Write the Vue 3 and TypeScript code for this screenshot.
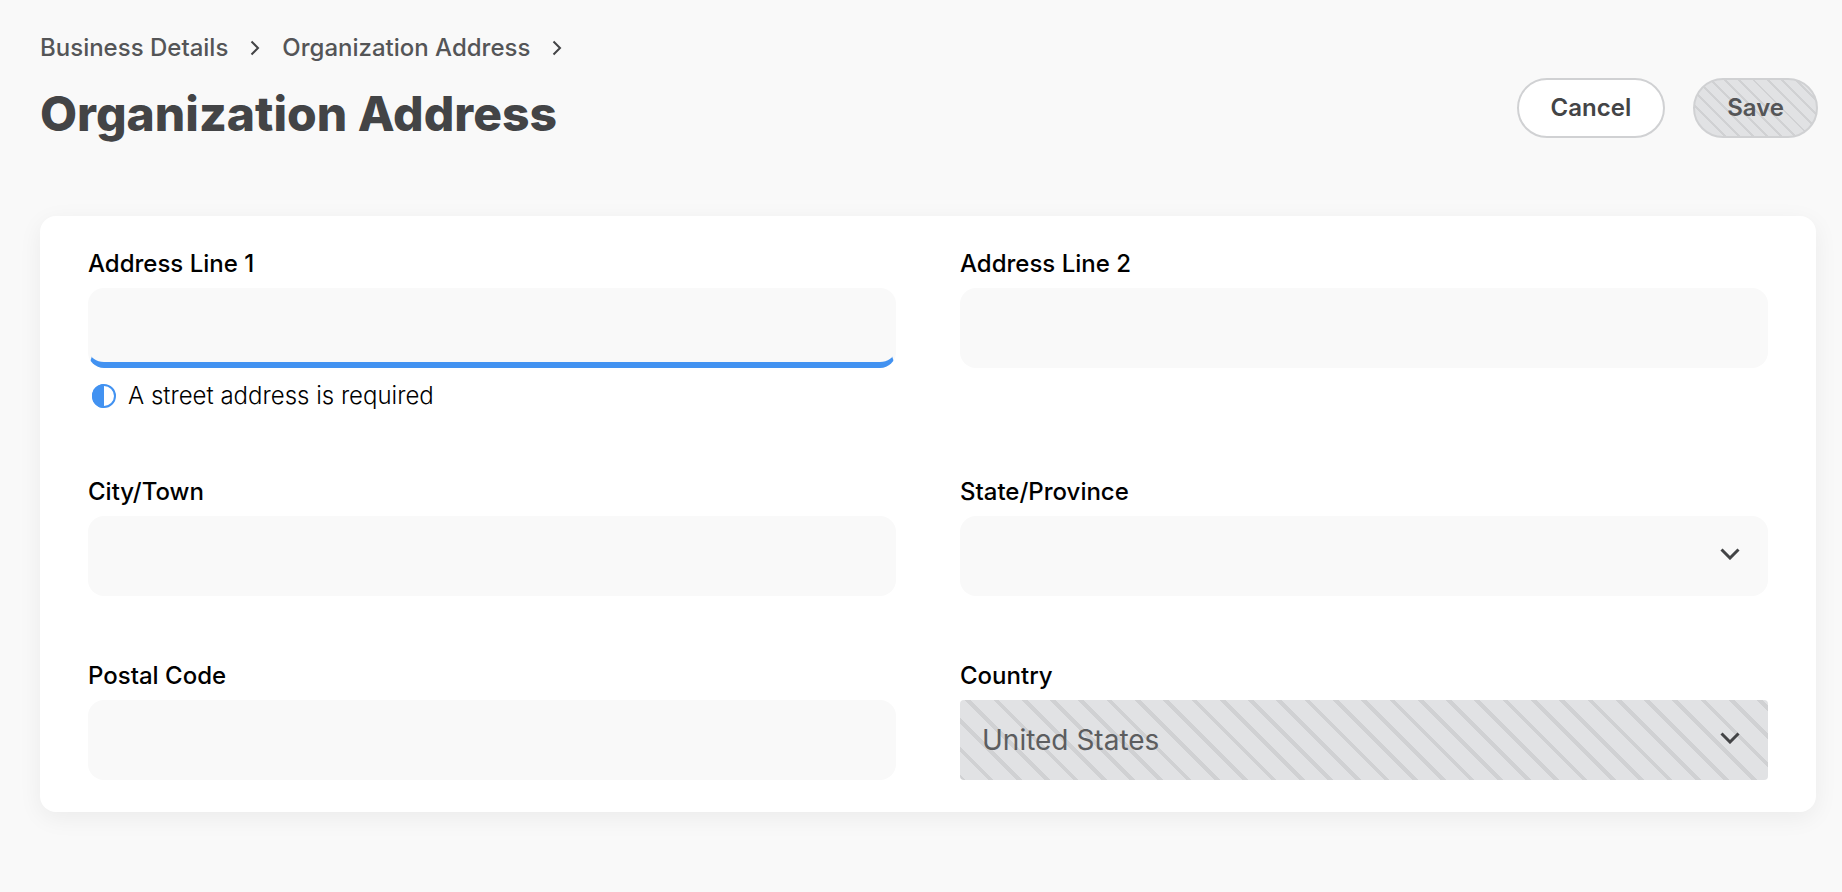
<script setup lang="ts">
import { ref } from 'vue'

interface Crumb {
  label: string
  href: string
}

const crumbs: Crumb[] = [
  { label: 'Business Details', href: '#business-details' },
  { label: 'Organization Address', href: '#organization-address' },
]

const states: string[] = ['California', 'New York', 'Texas', 'Washington']

const line1 = ref('')
const line2 = ref('')
const city = ref('')
const state = ref('')
const postalCode = ref('')
const country = ref('United States')
</script>

<template>
  <main class="page">
    <header class="head">
      <nav class="crumbs" aria-label="Breadcrumb">
        <template v-for="crumb in crumbs" :key="crumb.href">
          <a class="crumb" :href="crumb.href">{{ crumb.label }}</a>
          <svg class="crumb-arrow" viewBox="0 0 10 16" aria-hidden="true">
            <path d="M1.5 1.5 8 8l-6.500 6.500" />
          </svg>
        </template>
      </nav>
      <div class="title-row">
        <h1 class="title">Organization Address</h1>
        <div class="actions">
          <button class="btn" type="button">Cancel</button>
          <button class="btn btn-disabled" type="submit" form="address" disabled>Save</button>
        </div>
      </div>
    </header>

    <form id="address" class="card" @submit.prevent>
      <div class="field">
        <label class="label" for="line1">Address Line 1</label>
        <input id="line1" v-model="line1" class="control control-invalid" type="text" aria-describedby="line1-hint" />
        <p id="line1-hint" class="hint">
          <svg class="hint-icon" viewBox="0 0 24 24" aria-hidden="true">
            <circle cx="12" cy="12" r="11" />
            <path d="M12 0a12 12 0 0 0 0 24z" />
          </svg>
          <span>A street address is required</span>
        </p>
      </div>

      <div class="field">
        <label class="label" for="line2">Address Line 2</label>
        <input id="line2" v-model="line2" class="control" type="text" />
      </div>

      <div class="field">
        <label class="label" for="city">City/Town</label>
        <input id="city" v-model="city" class="control" type="text" />
      </div>

      <div class="field">
        <label class="label" for="state">State/Province</label>
        <div class="select">
          <select id="state" v-model="state" class="control">
            <option value=""></option>
            <option v-for="name in states" :key="name" :value="name">{{ name }}</option>
          </select>
          <svg class="select-arrow" viewBox="0 0 20 12" aria-hidden="true">
            <path d="M1.500 1.500 10 10l8.500-8.500" />
          </svg>
        </div>
      </div>

      <div class="field">
        <label class="label" for="postal">Postal Code</label>
        <input id="postal" v-model="postalCode" class="control" type="text" />
      </div>

      <div class="field">
        <label class="label" for="country">Country</label>
        <div class="select">
          <select id="country" v-model="country" class="control control-disabled" disabled>
            <option>United States</option>
          </select>
          <svg class="select-arrow" viewBox="0 0 20 12" aria-hidden="true">
            <path d="M1.500 1.500 10 10l8.500-8.500" />
          </svg>
        </div>
      </div>
    </form>
  </main>
</template>

<style>
body {
  margin: 0;
  background: #f9f9f9;
}
</style>

<style scoped>
.page {
  box-sizing: border-box;
  min-height: 100vh;
  padding: 32px 0;
  background: #f9f9f9;
  color: #434446;
  font-family: Inter, "Liberation Sans", sans-serif;
  font-size: 24px;
  line-height: 32px;
}

.head {
  padding: 0 24px 0 40px;
}

.crumbs {
  display: flex;
  flex-wrap: wrap;
  align-items: center;
  gap: 22px;
}

.crumb {
  color: #545557;
  font-weight: 500;
  text-decoration: none;
}

.crumb-arrow {
  width: 10px;
  height: 16px;
  fill: none;
  stroke: #434446;
  stroke-width: 2;
}

.title-row {
  display: flex;
  align-items: flex-start;
  justify-content: space-between;
  gap: 28px;
  margin-top: 14px;
}

.title {
  margin: 0;
  font-size: 48px;
  font-weight: 800;
  line-height: 72px;
}

.actions {
  display: flex;
  gap: 28px;
}

.btn {
  box-sizing: border-box;
  height: 60px;
  padding: 0 32px;
  border: 2px solid #d0d1d3;
  border-radius: 30px;
  background: #fff;
  color: #434446;
  font: inherit;
  font-weight: 600;
}

.btn-disabled {
  background: repeating-linear-gradient(45deg, #d0d1d3 0 2px, #e1e2e4 2px 10px);
  color: #545557;
}

.card {
  display: grid;
  grid-template-columns: repeat(2, minmax(0, 1fr));
  align-items: start;
  gap: 64px;
  margin: 66px 26px 0 40px;
  padding: 32px 48px;
  border-radius: 16px;
  background: #fff;
  box-shadow: 0 6px 24px rgba(0, 0, 0, 0.06);
}

.field {
  display: flex;
  flex-direction: column;
}

.label {
  margin-bottom: 8px;
  color: #000;
  font-weight: 500;
}

.control {
  box-sizing: border-box;
  width: 100%;
  height: 80px;
  margin: 0;
  padding: 4px 20px 0;
  border: 2px solid transparent;
  border-bottom-width: 6px;
  border-radius: 16px;
  outline: none;
  appearance: none;
  background: #f9f9f9 border-box;
  color: #1b1c1e;
  font: inherit;
  font-size: 28px;
}

.control-invalid {
  border-bottom-color: #4292f1;
}

.control-disabled {
  border-radius: 4px;
  background: repeating-linear-gradient(45deg, #d0d1d3 0 4px, #e1e2e4 4px 20px) border-box;
  color: #5c5d5f;
  opacity: 1;
}

.select {
  display: grid;
  align-items: center;
}

.select > * {
  grid-area: 1 / 1;
}

.select-arrow {
  justify-self: end;
  width: 20px;
  height: 12px;
  margin: 0 28px 4px 0;
  fill: none;
  stroke: #434446;
  stroke-width: 3;
  pointer-events: none;
}

.hint {
  display: flex;
  align-items: center;
  gap: 12px;
  margin: 12px 0 0 4px;
  color: #000;
  font-weight: 300;
}

.hint-icon {
  width: 24px;
  height: 24px;
  fill: #4292f1;
}

.hint-icon circle {
  fill: none;
  stroke: #4292f1;
  stroke-width: 2;
}
</style>
